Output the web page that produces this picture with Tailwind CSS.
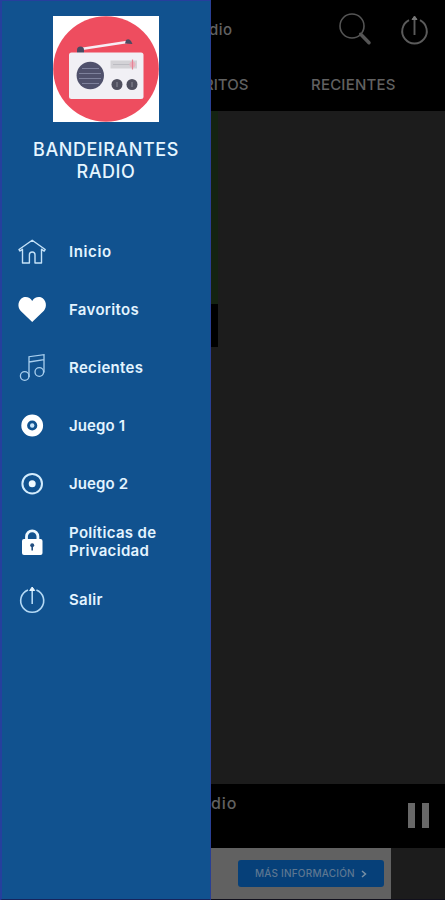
<!DOCTYPE html>
<html lang="es">
<head>
<meta charset="utf-8">
<title>Bandeirantes Radio</title>
<script src="https://cdn.jsdelivr.net/npm/@tailwindcss/browser@4"></script>
</head>
<body class="w-[445px] h-[900px] overflow-hidden bg-black font-['Inter','Liberation_Sans',sans-serif]">
<div class="flex w-full h-full">
  <aside class="w-[211px] h-full shrink-0 bg-[#11528f] border-l-2 border-t border-r border-b border-l-[#263f9d] border-t-[#263f9d] border-r-[#283f94] border-b-[#17245c] flex flex-col">
    <header class="flex flex-col items-center pt-[15px] h-[222px]">
      <svg class="w-[106px] h-[106px] shrink-0" viewBox="0 0 106 106">
        <rect width="106" height="106" fill="#fff"/>
        <circle cx="53" cy="53" r="52.8" fill="#ee4d5f"/>
        <path d="M28 33 74 26" stroke="#f6eef4" stroke-width="2.4"/>
        <path d="M24 37v-3a3.500 3.500 0 0 1 7 0v3zM72 27.500l1-3.500q3-2 5 1l1.500 3z" fill="#4a4a61"/>
        <rect x="16" y="36.500" width="74.500" height="46.500" rx="2.500" fill="#f1f0f5"/>
        <circle cx="37.300" cy="59.500" r="13.700" fill="#50516c"/>
        <path d="M29 52.500h17M26 57.500h22M26 62.500h22M29 67.500h17" stroke="#7e819c" stroke-width="1"/>
        <rect x="57.500" y="44.500" width="26.500" height="8" fill="#d3d2d6"/>
        <path d="M60 48.500h21" stroke="#bcbcc2" stroke-width="1"/>
        <circle cx="79.500" cy="48.500" r="3" fill="#e8b4c0"/><path d="M79.500 43.500v10" stroke="#e58394" stroke-width="1.200"/>
        <circle cx="64" cy="68.500" r="5.500" fill="#50505f"/><circle cx="79" cy="68.500" r="5.500" fill="#50505f"/>
        <path d="M64 66v5M79 66v5" stroke="#8b8b98"/>
      </svg>
      <h1 class="mt-[17px] text-center text-[18px] leading-[22px] font-medium text-[#e6f6ff] tracking-[0.55px]">BANDEIRANTES<br>RADIO</h1>
    </header>
    <nav class="flex flex-col text-[15px] leading-[18px] font-semibold tracking-[0.32px] text-[#e3f4ff]">
      <a class="flex items-center h-[58px] pl-[14px] gap-[21px]">
        <svg class="w-8 h-8 shrink-0" viewBox="0 0 32 32" fill="none" stroke="#c5e2f8" stroke-width="1.400" stroke-linejoin="round" stroke-linecap="round"><path d="M3 13.500 16.200 4.200l13 9.300-1 1.600-2.700-1.800V27H19v-8.200a2.800 2.800 0 0 0-5.600 0V27H6.500V13.300L4 15z"/></svg>
        <span class="tracking-[0.6px]">Inicio</span></a>
      <a class="flex items-center h-[58px] pl-[14px] gap-[21px]">
        <svg class="w-8 h-8 shrink-0" viewBox="0 0 32 32" fill="#fff"><path d="M16.200 28 4.500 16.700C1 13 2 5.300 7.500 3.300c3.500-1 7 .5 8.700 3.700 1.700-3.200 5.200-4.700 8.700-3.700 5.500 2 6.500 9.700 3 13.400z"/></svg>
        <span>Favoritos</span></a>
      <a class="flex items-center h-[58px] pl-[14px] gap-[21px]">
        <svg class="w-8 h-8 shrink-0" viewBox="0 0 32 32" fill="none" stroke="#a9cfee" stroke-width="1.300"><circle cx="8.700" cy="24" r="4.300"/><circle cx="23.300" cy="20" r="4.300"/><path d="M13 25V4.700L28 2.700V20.500M13 10 28 7.700"/></svg>
        <span>Recientes</span></a>
      <a class="flex items-center h-[58px] pl-[14px] gap-[21px]">
        <svg class="w-8 h-8 shrink-0" viewBox="0 0 32 32" fill="none"><circle cx="16.200" cy="15.500" r="8" stroke="#fff" stroke-width="5.800"/><circle cx="16.200" cy="15.500" r="2.200" fill="#c7e4fa"/></svg>
        <span class="tracking-[0.1px]">Juego 1</span></a>
      <a class="flex items-center h-[58px] pl-[14px] gap-[21px]">
        <svg class="w-8 h-8 shrink-0" viewBox="0 0 32 32" fill="none"><circle cx="16.200" cy="15.700" r="9.800" stroke="#d3ecfd" stroke-width="2"/><circle cx="16.200" cy="15.700" r="3.500" fill="#f0faff"/></svg>
        <span class="tracking-[0.1px]">Juego 2</span></a>
      <a class="flex items-center h-[58px] pl-[14px] gap-[21px]">
        <svg class="w-8 h-8 shrink-0" viewBox="0 0 32 32" fill="none"><path d="M10.500 15v-4.500a5.700 5.700 0 0 1 11.400 0V15" stroke="#edf8ff" stroke-width="2.800"/><rect x="6" y="13" width="20.500" height="16" rx="2" fill="#fff"/><circle cx="16.200" cy="19.300" r="2" fill="#234f80"/><path d="M16.200 19.500v5" stroke="#234f80" stroke-width="1.600"/></svg>
        <span>Políticas de<br>Privacidad</span></a>
      <a class="flex items-center h-[58px] pl-[14px] gap-[21px]">
        <svg class="w-8 h-8 shrink-0" viewBox="0 0 32 32" fill="none" stroke="#b4d9f5" stroke-width="1.600"><path d="M12 6a11.500 11.500 0 1 0 8.400 0M16.200 20V5"/><path d="M13.700 6.500 16.200 3l2.500 3.500z" fill="#e8f6ff" stroke="#e8f6ff" stroke-width="1"/></svg>
        <span>Salir</span></a>
    </nav>
  </aside>
  <main class="w-[234px] h-full overflow-hidden flex flex-col text-[#616161]">
    <header class="h-[60px] shrink-0 flex items-center">
      <span class="ml-[-2px] w-[127px] text-[15px] font-medium tracking-[0.5px]">dio</span>
      <svg class="w-9 h-9 shrink-0 ml-[1px]" viewBox="0 0 36 36" fill="none" stroke="#555"><circle cx="15" cy="14" r="12" stroke-width="1.600"/><path d="m24 22.500 8 8.200" stroke-width="3.500" stroke-linecap="round"/><path d="m22.500 21 2 2" stroke-width="2"/></svg>
      <svg class="w-8 h-8 shrink-0 ml-[25px]" viewBox="0 0 32 32" fill="none" stroke="#5b5b5b" stroke-width="1.900"><path d="M11 6.200a12.300 12.300 0 1 0 11 0M16.500 21V5"/><path d="m14 5.500 2.500-3.500L19 5.500z" fill="#777" stroke="#777" stroke-width="1"/></svg>
    </header>
    <nav class="h-[51px] shrink-0 flex items-center text-[15px] font-medium">
      <span class="ml-[-7px] w-[107px]">RITOS</span>
      <span class="tracking-[0.2px]">RECIENTES</span>
    </nav>
    <section class="h-[673px] shrink-0 bg-[#1c1c1c]">
      <div class="w-[7px] h-[193px] bg-[#142312]"></div>
      <div class="w-[7px] h-[43px] bg-black"></div>
    </section>
    <section class="h-[64px] shrink-0 flex justify-between pr-[16px]">
      <span class="mt-[8px] text-[16px] leading-[22px] font-medium tracking-[0.9px]">dio</span>
      <div class="flex gap-[7px] mt-[19px]"><i class="w-[7px] h-[25px] bg-[#686868]"></i><i class="w-[7px] h-[25px] bg-[#686868]"></i></div>
    </section>
    <footer class="h-[52px] shrink-0 flex bg-[#1c1c1c] border-b border-[#11101c]">
      <div class="w-[180px] h-full bg-[#616161] pl-[27px] pt-[12px]">
        <div class="w-[146px] h-[27px] rounded-[3px] bg-[#064079] flex items-center pl-[17px] text-[10px] font-medium text-[#5d7791]">
          <span class="w-[106px] whitespace-nowrap tracking-[0.2px]">MÁS INFORMACIÓN</span>
          <svg class="w-[6px] h-[8px]" viewBox="0 0 6 8" fill="none" stroke="#7890a5" stroke-width="1.500"><path d="m1 1 3.500 3L1 7"/></svg>
        </div>
      </div>
    </footer>
  </main>
</div>
</body>
</html>
